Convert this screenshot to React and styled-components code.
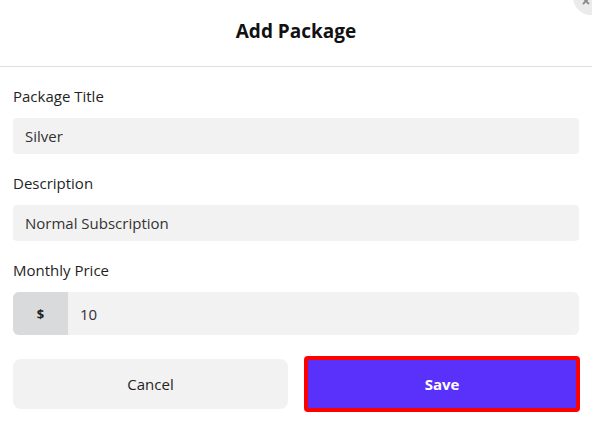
import React from 'react';
import styled, { createGlobalStyle } from 'styled-components';

const GlobalStyle = createGlobalStyle`
	html, body {
		margin: 0;
		padding: 0;
		background: #ffffff;
		font-family: 'Open Sans', 'Noto Sans', sans-serif;
		color: #1f1f1f;
	}
	* {
		box-sizing: border-box;
	}
`;

const Modal = styled.div`
	position: relative;
	width: 592px;
	height: 421px;
	background: #ffffff;
	overflow: hidden;
`;

const CloseButton = styled.button`
	position: absolute;
	top: -21px;
	right: -17px;
	width: 36px;
	height: 36px;
	border-radius: 50%;
	border: none;
	background: #ebebeb;
	display: flex;
	align-items: flex-start;
	justify-content: flex-start;
	padding: 18px 0 0 9px;
`;

const Header = styled.div`
	height: 67px;
	display: flex;
	align-items: center;
	justify-content: center;
	border-bottom: 1px solid #dedede;
	padding-bottom: 5px;
`;

const Title = styled.h2`
	margin: 0;
	font-size: 19px;
	font-weight: 700;
	color: #111;
`;

const Body = styled.form`
	padding: 19px 13px 0 13px;
	display: flex;
	flex-direction: column;
`;

const Field = styled.div`
	display: flex;
	flex-direction: column;
	gap: 12px;
	margin-bottom: 19px;
`;

const Label = styled.label`
	font-size: 15px;
	line-height: 20px;
	color: #1f1f1f;
`;

const Input = styled.div`
	height: 36px;
	background: #f2f2f2;
	border-radius: 4px;
	display: flex;
	align-items: center;
	padding-left: 12px;
	font-size: 15px;
	color: #333;
`;

const PriceRow = styled.div`
	display: flex;
	height: 43px;
	border-radius: 6px;
	overflow: hidden;
	background: #f2f2f2;
`;

const Addon = styled.span`
	width: 55px;
	background: #d9dadc;
	display: flex;
	align-items: center;
	justify-content: center;
	font-size: 13px;
	font-weight: 700;
	color: #222;
`;

const PriceValue = styled.span`
	display: flex;
	align-items: center;
	padding-left: 12px;
	font-size: 15px;
	color: #333;
`;

const Actions = styled.div`
	display: grid;
	grid-template-columns: 1fr 1fr;
	gap: 16px;
	margin-top: 2px;
	align-items: center;
`;

const Button = styled.button`
	font-family: inherit;
	font-size: 15px;
	cursor: pointer;
	border-radius: ${(p) => (p.primary ? '4px' : '8px')};
	height: ${(p) => (p.primary ? '56px' : '50px')};
	background: ${(p) => (p.primary ? '#5a31fa' : '#f2f2f2')};
	color: ${(p) => (p.primary ? '#ffffff' : '#1f1f1f')};
	font-weight: ${(p) => (p.primary ? 700 : 400)};
	border: ${(p) => (p.primary ? '4px solid #ff0000' : 'none')};
	margin-right: ${(p) => (p.primary ? '-1px' : '0')};
`;

export default function App() {
	return (
		<>
			<GlobalStyle />
			<Modal>
				<CloseButton aria-label="close">
					<svg width="8" height="8" viewBox="0 0 8 8">
						<path d="M1 1 L7 7 M7 1 L1 7" stroke="#8a8a8a" strokeWidth="1.8" />
					</svg>
				</CloseButton>
				<Header>
					<Title>Add Package</Title>
				</Header>
				<Body>
					<Field>
						<Label>Package Title</Label>
						<Input>Silver</Input>
					</Field>
					<Field>
						<Label>Description</Label>
						<Input>Normal Subscription</Input>
					</Field>
					<Field>
						<Label>Monthly Price</Label>
						<PriceRow>
							<Addon>$</Addon>
							<PriceValue>10</PriceValue>
						</PriceRow>
					</Field>
					<Actions>
						<Button type="button">Cancel</Button>
						<Button type="button" primary>
							Save
						</Button>
					</Actions>
				</Body>
			</Modal>
		</>
	);
}
